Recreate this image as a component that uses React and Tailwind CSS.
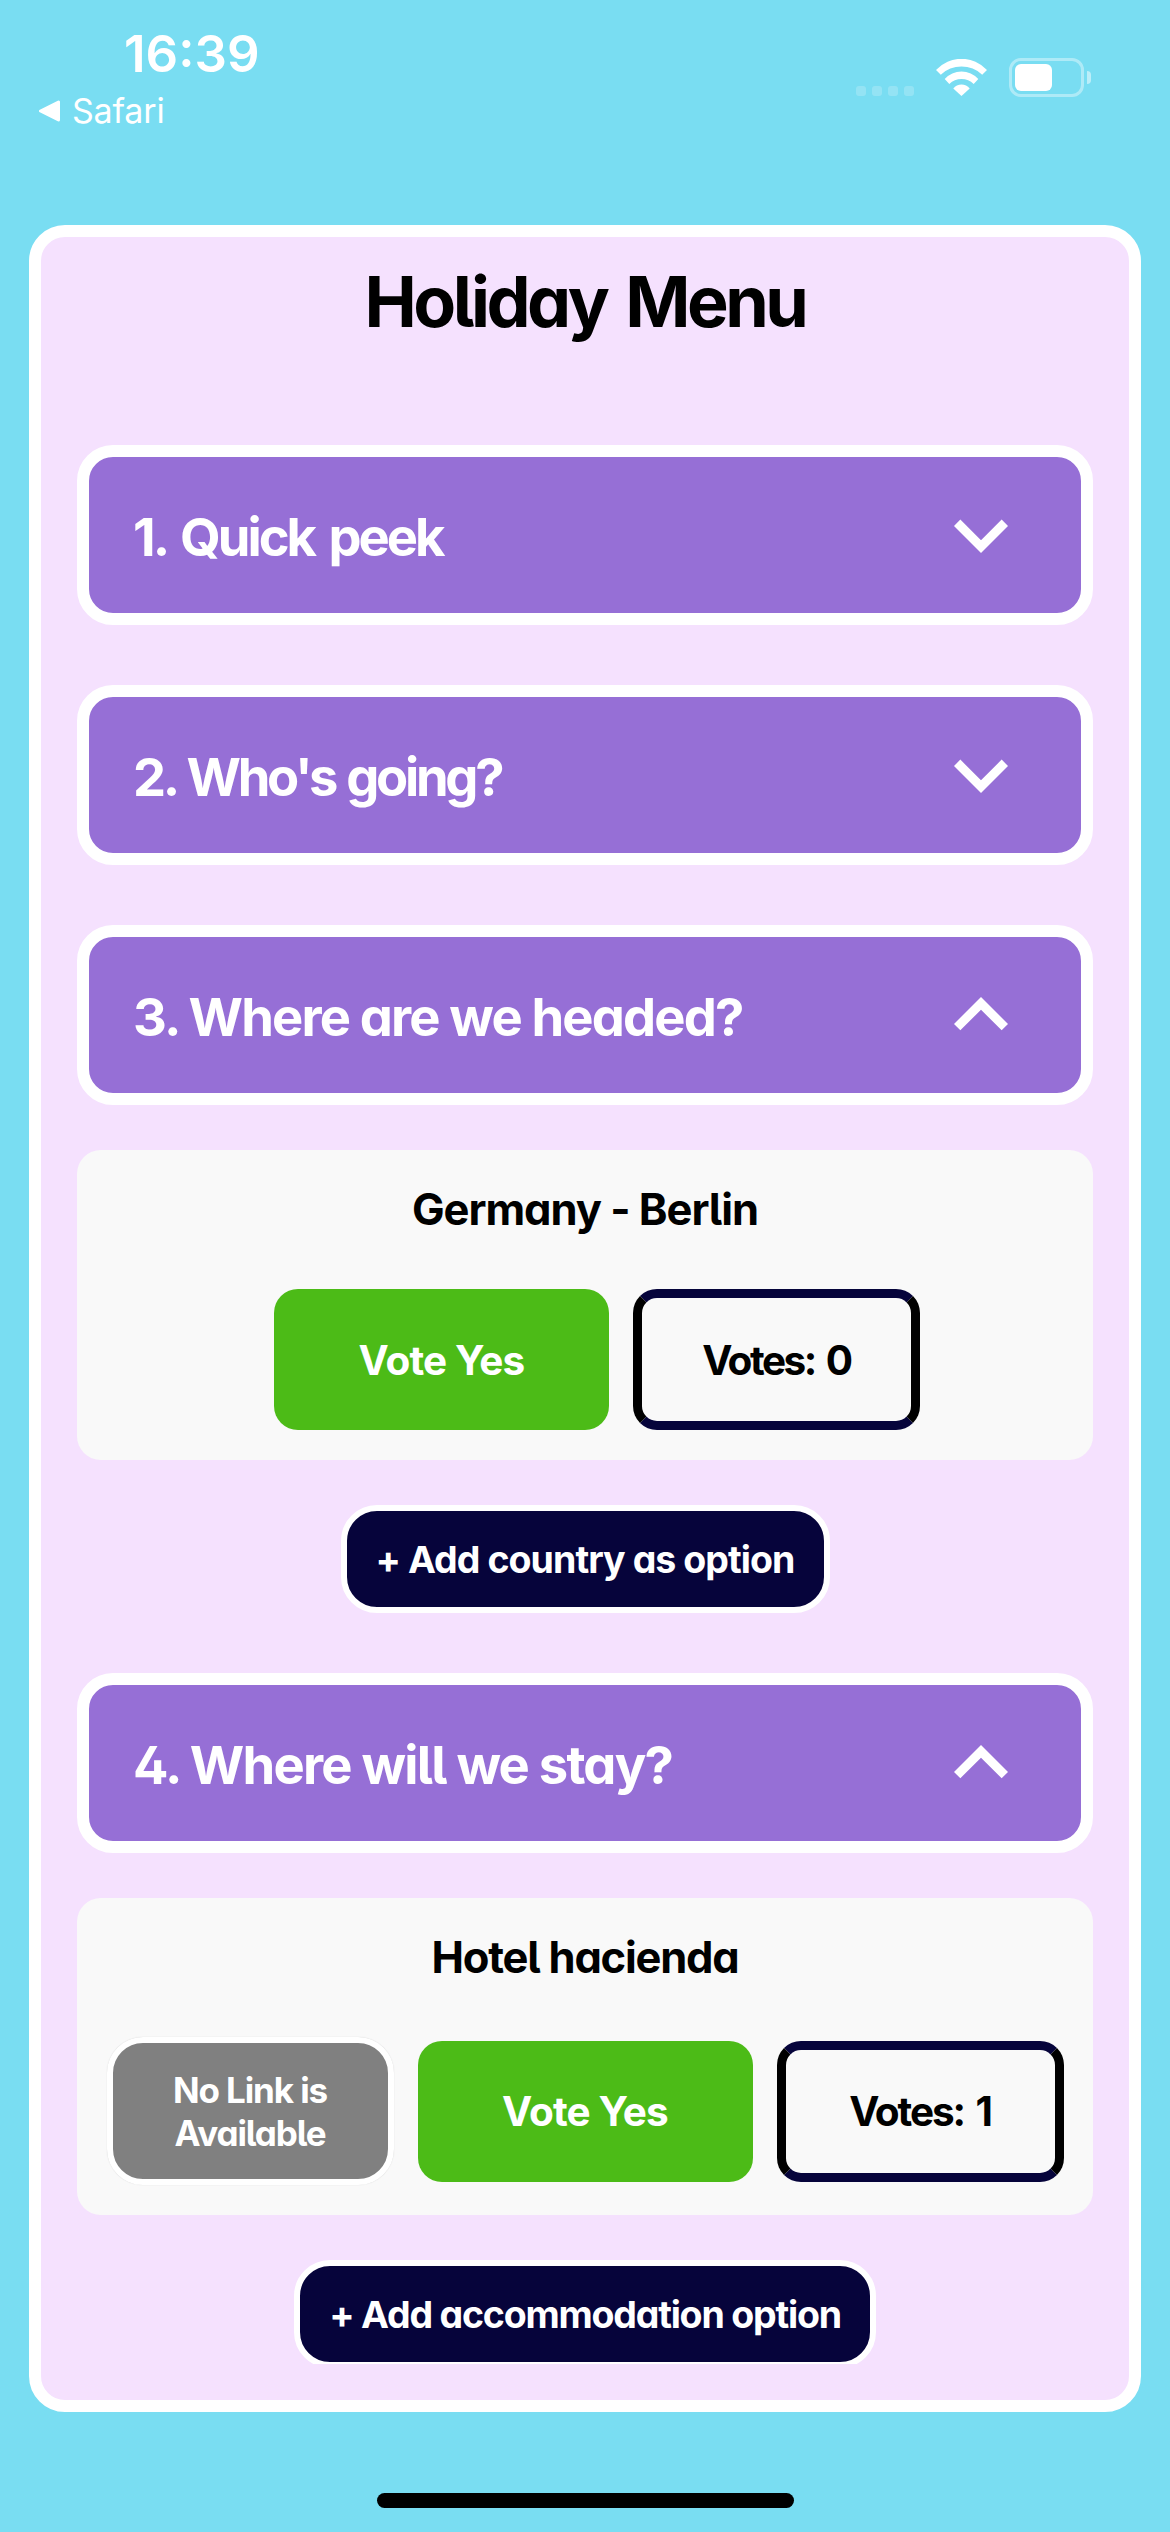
const CHEVRON_DOWN = "M7.41 8.58 12 13.17l4.59-4.59L18 10l-6 6-6-6z";
const CHEVRON_UP = "M7.41 15.41 12 10.83l4.59 4.58L18 14l-6-6-6 6z";

function StatusBar() {
  return (
    <header className="flex h-[225px] items-start justify-between pr-[79px] pl-[39px] text-white">
      <div className="pt-6">
        <div className="pl-[85px] text-[51px] leading-[60px] font-semibold">16:39</div>
        <div className="mt-[7px] flex h-10 items-center">
          <svg className="h-[22px] w-[22px]" viewBox="0 0 22 22" fill="white" stroke="white" strokeWidth="3" strokeLinejoin="round">
            <path d="M1.5 11 19.5 2v18z" />
          </svg>
          <span className="ml-[11px] text-[34px] leading-10 tracking-[-0.2px]">Safari</span>
        </div>
      </div>
      <div className="flex h-[97px] items-end">
        <div className="mb-px flex gap-1.5 opacity-20">
          <i className="size-[10px] rounded-[3px] bg-white" />
          <i className="size-[10px] rounded-[3px] bg-white" />
          <i className="size-[10px] rounded-[3px] bg-white" />
          <i className="size-[10px] rounded-[3px] bg-white" />
        </div>
        <svg className="mb-px ml-[22px] h-[37px] w-[51px]" viewBox="0 0 51 37" fill="white">
          <path d="M0 11A34.6 34.6 0 0 1 51 11L46.2 15.7A30 30 0 0 0 4.8 15.7z" />
          <path d="M8.7 20A22.7 22.7 0 0 1 42.3 20L37.7 25A17.6 17.6 0 0 0 13.3 25z" />
          <path d="M17.3 29.5A10.5 10.5 0 0 1 33.7 29.5L25.5 37z" />
        </svg>
        <div className="ml-[22px] h-[39px] w-[75px] rounded-[12px] border-3 border-white/40 p-[3px]">
          <div className="h-[27px] w-[37px] rounded-[6px] bg-white" />
        </div>
        <div className="mb-[13px] ml-[3px] h-[13px] w-1 rounded-r-full bg-white/50" />
      </div>
    </header>
  );
}

function Section({ title, open, tracking }) {
  return (
    <button className="flex h-[180px] w-full shrink-0 items-center justify-between rounded-[36px] border-12 border-white bg-[#966FD6] pr-[46px] pl-11 text-white">
      <span className={`pt-1 text-[52.5px] leading-[64px] ${tracking}`}>{title}</span>
      <svg className="size-[108px]" viewBox="0 0 24 24" fill="white">
        <path d={open ? CHEVRON_UP : CHEVRON_DOWN} />
      </svg>
    </button>
  );
}

function VoteYes() {
  return (
    <button className="h-[141px] w-[335px] rounded-3xl bg-[#4CBB17] pt-[3px] text-[40.5px] tracking-[-0.87px] text-white">
      Vote Yes
    </button>
  );
}

function Votes({ count, tracking }) {
  return (
    <div className={`flex h-[141px] w-[287px] items-center justify-center rounded-3xl border-9 border-x-black border-y-[#06043B] pt-[3px] text-[40.5px] [word-spacing:4px] ${tracking}`}>
      Votes: {count}
    </div>
  );
}

function OptionCard({ title, tracking, children, rowClass }) {
  return (
    <div className="mt-[45px] w-full rounded-3xl bg-[#F9F9F9] pt-8 pb-[30px]">
      <h2 className={`text-center text-[43.5px] leading-[54px] ${tracking}`}>{title}</h2>
      <div className={`mt-[53px] flex items-center justify-center gap-6 ${rowClass}`}>{children}</div>
    </div>
  );
}

function AddButton({ children, className }) {
  return (
    <button className={`h-[108px] rounded-[36px] border-6 border-white bg-[#06043B] pt-[2px] text-[37.5px] whitespace-nowrap text-white ${className}`}>
      {children}
    </button>
  );
}

export default function App() {
  return (
    <div className="flex h-[2532px] w-[1170px] flex-col overflow-hidden bg-[#79DDF2] font-['Inter',sans-serif]">
      <StatusBar />
      <main className="mx-[29px] flex h-[2187px] flex-col items-center rounded-[36px] border-12 border-white bg-[#F5E1FE] px-9 pt-[22px] font-bold text-black [font-feature-settings:'cv11','cv05','cv02']">
        <h1 className="text-[70px] leading-[85px] tracking-[-3.5px] [word-spacing:6px]">Holiday Menu</h1>
        <div className="mt-[101px] flex w-full flex-col gap-[60px]">
          <Section title="1. Quick peek" tracking="tracking-[-3px] [word-spacing:5px]" />
          <Section title="2. Who's going?" tracking="tracking-[-3.3px] [word-spacing:2px]" />
          <Section title="3. Where are we headed?" tracking="tracking-[-1.84px]" open />
        </div>
        <OptionCard title="Germany - Berlin" tracking="tracking-[-1.03px]" rowClass="pl-6">
          <VoteYes />
          <Votes count={0} tracking="tracking-[-2.5px]" />
        </OptionCard>
        <AddButton className="mt-[45px] w-[489px] tracking-[-0.95px]">+ Add country as option</AddButton>
        <div className="mt-[60px] w-full">
          <Section title="4. Where will we stay?" tracking="tracking-[-1.76px]" open />
        </div>
        <OptionCard title="Hotel hacienda" tracking="tracking-[-1.22px]" rowClass="">
          <div className="flex h-[148px] w-[287px] items-center justify-center rounded-[36px] border-6 border-white bg-[#808080] pt-[2px] text-center text-[35px] leading-[43px] tracking-[-1.1px] text-white shadow-[0_0_1px_#80808066]">
            No Link is
            <br />
            Available
          </div>
          <VoteYes />
          <Votes count={1} tracking="tracking-[-2.1px]" />
        </OptionCard>
        <div className="mt-[45px] h-[104px] overflow-hidden">
          <AddButton className="w-[582px] tracking-[-1.21px]">+ Add accommodation option</AddButton>
        </div>
      </main>
      <div className="mx-auto mt-[81px] h-[15px] w-[417px] rounded-full bg-black" />
    </div>
  );
}
